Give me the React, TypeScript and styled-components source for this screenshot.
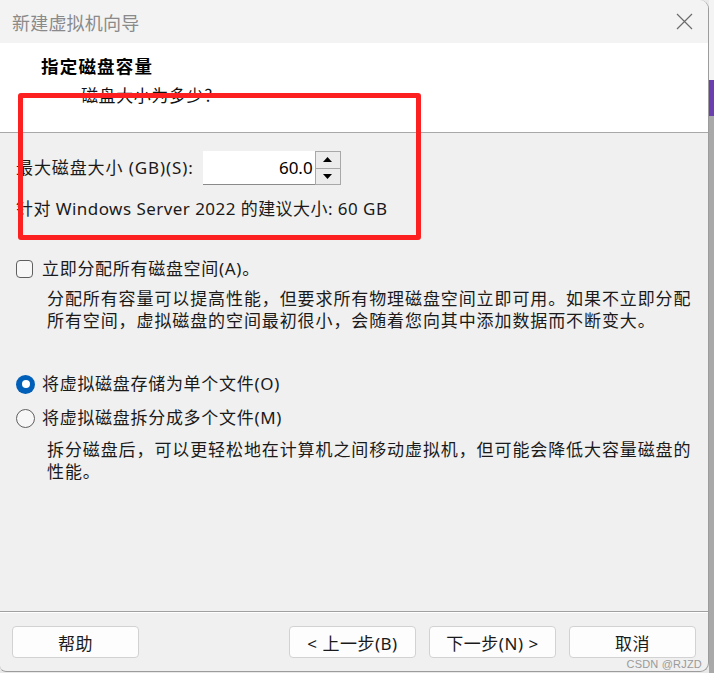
import React from "react";
import styled, { createGlobalStyle } from "styled-components";

const Global = createGlobalStyle`
  html, body { margin: 0; padding: 0; }
  body {
    width: 714px;
    height: 673px;
    overflow: hidden;
    background: #e9e9e9;
    font-family: "Noto Sans", "Noto Sans CJK SC", sans-serif;
  }
`;

const Page = styled.div`
  display: flex;
  width: 714px;
  height: 673px;
`;

const Window = styled.div`
  position: relative;
  width: 709px;
  height: 672px;
  box-sizing: border-box;
  border-right: 1px solid #9c9c9c;
  border-bottom: 1px solid #9c9c9c;
  border-radius: 0 9px 9px 6px;
  background: #f0f0f0;
  display: flex;
  flex-direction: column;
  overflow: hidden;
`;

const Side = styled.div`
  flex: 1;
  display: flex;
  flex-direction: column;
`;

const SideSeg = styled.div<{ $h: number; $c: string }>`
  height: ${(p) => p.$h}px;
  background: ${(p) => p.$c};
`;

const TitleBar = styled.div`
  height: 43px;
  flex: none;
  background: #f3f3f3;
  display: flex;
  align-items: center;
  justify-content: space-between;
  padding: 0 0 0 12px;
`;

const TitleText = styled.span`
  font-family: "Noto Sans CJK SC", sans-serif;
  font-size: 18px;
  color: #8a8a8a;
  letter-spacing: 0.2px;
`;

const CloseBtn = styled.div`
  width: 46px;
  height: 43px;
  display: flex;
  align-items: center;
  justify-content: center;
  margin-right: 1px;
`;

const Header = styled.div`
  height: 90px;
  flex: none;
  box-sizing: border-box;
  background: #ffffff;
  border-bottom: 1px solid #a8a8a8;
  padding: 10px 0 0 41px;
`;

const HeadTitle = styled.div`
  font-family: "Noto Sans CJK SC", sans-serif;
  font-weight: 700;
  font-size: 17.5px;
  line-height: 26px;
  color: #000;
  letter-spacing: 1.2px;
`;

const HeadSub = styled.div`
  font-family: "Noto Sans CJK SC", sans-serif;
  font-size: 17px;
  line-height: 22px;
  color: #111;
  margin: 5px 0 0 40px;
  letter-spacing: 0.6px;
`;

const Body = styled.div`
  flex: 1;
  padding: 18px 0 0 16px;
  border-bottom: 1px solid #a0a0a0;
  box-shadow: 0 1px 0 #ffffff;
  font-size: 17px;
  color: #1a1a1a;
`;

const Row = styled.div<{ $mt?: number }>`
  display: flex;
  align-items: center;
  margin-top: ${(p) => p.$mt ?? 0}px;
  line-height: 22px;
  white-space: nowrap;
`;

const Label = styled.span<{ $ls?: number }>`
  letter-spacing: ${(p) => p.$ls ?? 0.7}px;
`;

const Spin = styled.div`
  display: flex;
  margin-left: 9px;
  height: 34px;
`;

const SpinInput = styled.div`
  width: 112px;
  height: 34px;
  box-sizing: border-box;
  background: #fff;
  border-bottom: 1px solid #8a8a8a;
  display: flex;
  align-items: center;
  justify-content: flex-end;
  padding-right: 2px;
  font-size: 17px;
  color: #000;
`;

const SpinButtons = styled.div`
  width: 26px;
  height: 34px;
  box-sizing: border-box;
  border: 1px solid #a8a8a8;
  display: flex;
  flex-direction: column;
  gap: 1px;
  background: #a8a8a8;
`;

const SpinBtn = styled.div`
  flex: 1;
  background: #ececec;
  display: flex;
  align-items: center;
  justify-content: center;
`;

const Desc = styled.div<{ $mt: number }>`
  margin: ${(p) => p.$mt}px 0 0 31px;
  line-height: 22px;
  letter-spacing: 0.9px;
  white-space: nowrap;
`;

const Check = styled.span`
  width: 17px;
  height: 18px;
  box-sizing: border-box;
  border: 1px solid #5f5f5f;
  border-radius: 4px;
  background: #f7f7f7;
  margin-right: 9px;
  flex: none;
`;

const Radio = styled.span<{ $on?: boolean }>`
  width: 19px;
  height: 19px;
  box-sizing: border-box;
  border-radius: 50%;
  flex: none;
  margin-right: 7px;
  display: flex;
  align-items: center;
  justify-content: center;
  border: ${(p) => (p.$on ? "none" : "1px solid #5f5f5f")};
  background: ${(p) => (p.$on ? "#005fb8" : "#f7f7f7")};
  &::after {
    content: "";
    display: ${(p) => (p.$on ? "block" : "none")};
    width: 8px;
    height: 8px;
    border-radius: 50%;
    background: #fff;
  }
`;

const Footer = styled.div`
  height: 59px;
  flex: none;
  display: flex;
  align-items: flex-start;
  padding: 14px 0 0 12px;
  box-sizing: border-box;
`;

const Button = styled.div<{ $ml?: number }>`
  width: 127px;
  height: 32px;
  box-sizing: border-box;
  margin-left: ${(p) => p.$ml ?? 0}px;
  background: #fdfdfd;
  border: 1px solid #d2d2d2;
  border-radius: 4px;
  display: flex;
  align-items: center;
  justify-content: center;
  font-size: 17px;
  color: #1a1a1a;
  letter-spacing: 0.5px;
`;

const RedBox = styled.div`
  position: absolute;
  left: 18px;
  top: 93px;
  width: 403px;
  height: 147px;
  box-sizing: border-box;
  border: 5px solid #fd2020;
  border-radius: 3px;
  pointer-events: none;
`;

const Watermark = styled.div`
  position: absolute;
  right: 6px;
  bottom: 1px;
  font-family: "Liberation Sans", sans-serif;
  font-size: 11px;
  color: #9a9a9a;
  letter-spacing: 0.2px;
`;

export default function App() {
  return (
    <>
      <Global />
      <Page>
        <Window>
          <TitleBar>
            <TitleText>新建虚拟机向导</TitleText>
            <CloseBtn>
              <svg width="17" height="17" viewBox="0 0 17 17">
                <path d="M1 1 L16 16 M16 1 L1 16" stroke="#6b6b6b" strokeWidth="1.2" fill="none" />
              </svg>
            </CloseBtn>
          </TitleBar>
          <Header>
            <HeadTitle>指定磁盘容量</HeadTitle>
            <HeadSub>磁盘大小为多少?</HeadSub>
          </Header>
          <Body>
            <Row>
              <Label $ls={0.9}>最大磁盘大小 (GB)(S):</Label>
              <Spin>
                <SpinInput>60.0</SpinInput>
                <SpinButtons>
                  <SpinBtn>
                    <svg width="9" height="5" viewBox="0 0 9 5">
                      <path d="M0 5 L4.5 0 L9 5 Z" fill="#000" />
                    </svg>
                  </SpinBtn>
                  <SpinBtn>
                    <svg width="9" height="5" viewBox="0 0 9 5">
                      <path d="M0 0 L4.5 5 L9 0 Z" fill="#000" />
                    </svg>
                  </SpinBtn>
                </SpinButtons>
              </Spin>
            </Row>
            <Row $mt={13}>
              <Label $ls={0.45}>针对 Windows Server 2022 的建议大小: 60 GB</Label>
            </Row>
            <Row $mt={38}>
              <Check />
              <Label>立即分配所有磁盘空间(A)。</Label>
            </Row>
            <Desc $mt={8}>
              分配所有容量可以提高性能，但要求所有物理磁盘空间立即可用。如果不立即分配
              <br />
              所有空间，虚拟磁盘的空间最初很小，会随着您向其中添加数据而不断变大。
            </Desc>
            <Row $mt={41}>
              <Radio $on />
              <Label>将虚拟磁盘存储为单个文件(O)</Label>
            </Row>
            <Row $mt={12}>
              <Radio />
              <Label>将虚拟磁盘拆分成多个文件(M)</Label>
            </Row>
            <Desc $mt={10}>
              拆分磁盘后，可以更轻松地在计算机之间移动虚拟机，但可能会降低大容量磁盘的
              <br />
              性能。
            </Desc>
          </Body>
          <Footer>
            <Button>帮助</Button>
            <Button $ml={150}>&lt; 上一步(B)</Button>
            <Button $ml={13}>下一步(N) &gt;</Button>
            <Button $ml={13}>取消</Button>
          </Footer>
          <RedBox />
          <Watermark>CSDN @RJZD</Watermark>
        </Window>
        <Side>
          <SideSeg $h={80} $c="#f4f4f4" />
          <SideSeg $h={36} $c="#6c3fb0" />
          <SideSeg $h={557} $c="#a9a9a9" />
        </Side>
      </Page>
    </>
  );
}
